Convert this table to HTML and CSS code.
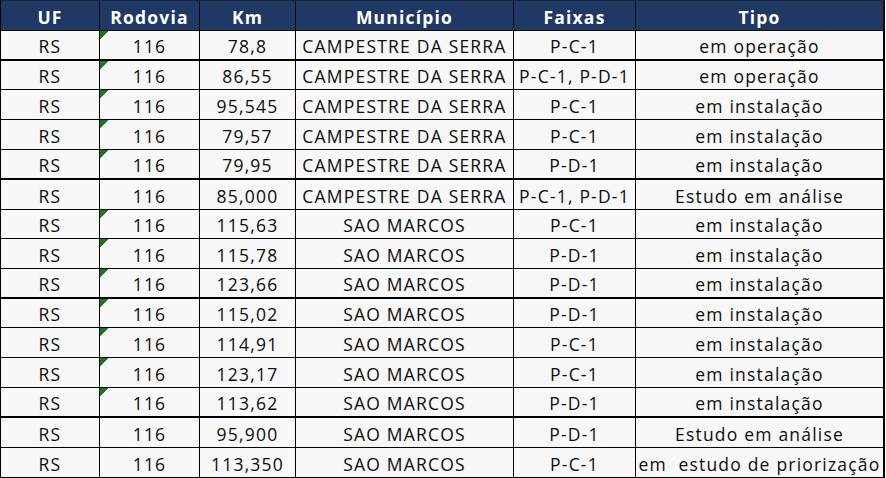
FILE: index.html
```html
<!DOCTYPE html>
<html lang="pt-BR">
<head>
<meta charset="utf-8">
<title>Tabela</title>
<link rel="stylesheet" href="styles.css">
</head>
<body>
<div class="sheet">
  <div class="row head">
    <div class="c">UF</div><div class="c">Rodovia</div><div class="c">Km</div><div class="c">Município</div><div class="c">Faixas</div><div class="c">Tipo</div>
  </div>
  <div class="row thick">
    <div class="c">RS</div><div class="c flag">116</div><div class="c">78,8</div><div class="c">CAMPESTRE DA SERRA</div><div class="c">P-C-1</div><div class="c">em operação</div>
  </div>
  <div class="row short">
    <div class="c">RS</div><div class="c flag">116</div><div class="c">86,55</div><div class="c">CAMPESTRE DA SERRA</div><div class="c">P-C-1, P-D-1</div><div class="c">em operação</div>
  </div>
  <div class="row">
    <div class="c">RS</div><div class="c flag">116</div><div class="c">95,545</div><div class="c">CAMPESTRE DA SERRA</div><div class="c">P-C-1</div><div class="c">em instalação</div>
  </div>
  <div class="row">
    <div class="c">RS</div><div class="c flag">116</div><div class="c">79,57</div><div class="c">CAMPESTRE DA SERRA</div><div class="c">P-C-1</div><div class="c">em instalação</div>
  </div>
  <div class="row thick">
    <div class="c">RS</div><div class="c flag">116</div><div class="c">79,95</div><div class="c">CAMPESTRE DA SERRA</div><div class="c">P-D-1</div><div class="c">em instalação</div>
  </div>
  <div class="row">
    <div class="c">RS</div><div class="c">116</div><div class="c">85,000</div><div class="c">CAMPESTRE DA SERRA</div><div class="c">P-C-1, P-D-1</div><div class="c">Estudo em análise</div>
  </div>
  <div class="row short">
    <div class="c">RS</div><div class="c flag">116</div><div class="c">115,63</div><div class="c">SAO MARCOS</div><div class="c">P-C-1</div><div class="c">em instalação</div>
  </div>
  <div class="row">
    <div class="c">RS</div><div class="c flag">116</div><div class="c">115,78</div><div class="c">SAO MARCOS</div><div class="c">P-D-1</div><div class="c">em instalação</div>
  </div>
  <div class="row thick">
    <div class="c">RS</div><div class="c flag">116</div><div class="c">123,66</div><div class="c">SAO MARCOS</div><div class="c">P-D-1</div><div class="c">em instalação</div>
  </div>
  <div class="row short">
    <div class="c">RS</div><div class="c flag">116</div><div class="c">115,02</div><div class="c">SAO MARCOS</div><div class="c">P-D-1</div><div class="c">em instalação</div>
  </div>
  <div class="row">
    <div class="c">RS</div><div class="c flag">116</div><div class="c">114,91</div><div class="c">SAO MARCOS</div><div class="c">P-C-1</div><div class="c">em instalação</div>
  </div>
  <div class="row">
    <div class="c">RS</div><div class="c flag">116</div><div class="c">123,17</div><div class="c">SAO MARCOS</div><div class="c">P-C-1</div><div class="c">em instalação</div>
  </div>
  <div class="row thick">
    <div class="c">RS</div><div class="c flag">116</div><div class="c">113,62</div><div class="c">SAO MARCOS</div><div class="c">P-D-1</div><div class="c">em instalação</div>
  </div>
  <div class="row">
    <div class="c">RS</div><div class="c">116</div><div class="c">95,900</div><div class="c">SAO MARCOS</div><div class="c">P-D-1</div><div class="c">Estudo em análise</div>
  </div>
  <div class="row">
    <div class="c">RS</div><div class="c">116</div><div class="c">113,350</div><div class="c">SAO MARCOS</div><div class="c">P-C-1</div><div class="c">em&nbsp; estudo de priorização</div>
  </div>
</div>
</body>
</html>
```
FILE: styles.css
```css
html, body {
  margin: 0;
  padding: 0;
  background: #ffffff;
}

.sheet {
  width: 885px;
  box-sizing: border-box;
  border-left: 1px solid #000;
  border-top: 1px solid #15223d;
  font-family: "Open Sans", "Liberation Sans", sans-serif;
  font-size: 17.5px;
  letter-spacing: 1.2px;
  color: #0d0d0d;
}

.row {
  display: grid;
  grid-template-columns: 99px 100px 96px 218px 122px 249px;
  height: 30px;
  box-sizing: border-box;
  border-bottom: 1px solid #000;
  background: #f7f7f7;
}

.row.short {
  height: 29px;
}

.row.thick {
  border-bottom-width: 2px;
}

.c {
  position: relative;
  display: flex;
  align-items: center;
  justify-content: center;
  box-sizing: border-box;
  border-right: 1px solid #000;
  padding-top: 2px;
  white-space: nowrap;
  overflow: hidden;
}

.c:last-child {
  border-right-width: 2px;
}

.head {
  background: #203864;
  color: #ffffff;
  font-weight: 700;
  border-bottom-color: #0b0f18;
}

.head .c {
  border-right-color: #0b0f18;
}

.flag::before {
  content: "";
  position: absolute;
  left: 0;
  top: 0;
  width: 9px;
  height: 8px;
  background: linear-gradient(to bottom right, #1a7a1a 50%, transparent 50%);
}
```
